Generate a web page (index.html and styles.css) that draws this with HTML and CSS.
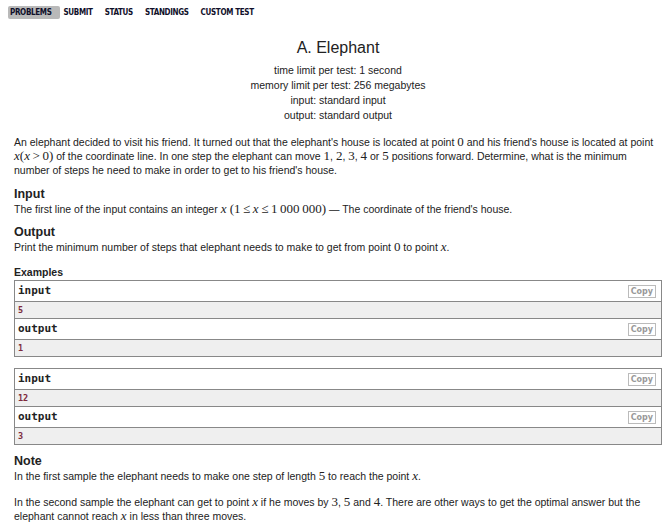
FILE: index.html
```html
<!DOCTYPE html>
<html lang="en">
  <head>
    <meta charset="UTF-8" />
    <title>A. Elephant</title>
    <link rel="stylesheet" href="styles.css">
  </head>
  <body>
    <div class="second-level-menu">
      <a href="#" class="current">Problems</a>
      <a href="#">Submit</a>
      <a href="#">Status</a>
      <a href="#">Standings</a>
      <a href="#">Custom test</a>
    </div>

    <div class="problem-statement">
      <div class="header">
        <div class="title">A. Elephant</div>
        <div class="limit">time limit per test: 1 second</div>
        <div class="limit">memory limit per test: 256 megabytes</div>
        <div class="limit">input: standard input</div>
        <div class="limit">output: standard output</div>
      </div>

      <p class="legend">
        An elephant decided to visit his friend. It turned out that the elephant's house is located at point <span class="tex">0</span> and his friend's house is located at point <span class="tex"><i>x</i>(<i>x</i>&thinsp;&gt;&thinsp;0)</span> of the coordinate line. In one step the elephant can move <span class="tex">1</span>, <span class="tex">2</span>, <span class="tex">3</span>, <span class="tex">4</span> or <span class="tex">5</span> positions forward. Determine, what is the minimum number of steps he need to make in order to get to his friend's house.
      </p>

      <div class="section">
        <div class="section-title">Input</div>
        <p>The first line of the input contains an integer <span class="tex"><i>x</i> (1&thinsp;&le;&thinsp;<i>x</i>&thinsp;&le;&thinsp;1&thinsp;000&thinsp;000)</span> — The coordinate of the friend's house.</p>
      </div>

      <div class="section">
        <div class="section-title">Output</div>
        <p>Print the minimum number of steps that elephant needs to make to get from point <span class="tex">0</span> to point <span class="tex"><i>x</i></span>.</p>
      </div>

      <div class="sample-tests">
        <div class="sample-title">Examples</div>

        <div class="sample-test">
          <div class="io">
            <div class="io-title">input<span class="copy">Copy</span></div>
            <pre>5</pre>
          </div>
          <div class="io">
            <div class="io-title">output<span class="copy">Copy</span></div>
            <pre>1</pre>
          </div>
        </div>

        <div class="sample-test">
          <div class="io">
            <div class="io-title">input<span class="copy">Copy</span></div>
            <pre>12</pre>
          </div>
          <div class="io">
            <div class="io-title">output<span class="copy">Copy</span></div>
            <pre>3</pre>
          </div>
        </div>
      </div>

      <div class="section note">
        <div class="section-title">Note</div>
        <p>In the first sample the elephant needs to make one step of length <span class="tex">5</span> to reach the point <span class="tex"><i>x</i></span>.</p>
        <p>In the second sample the elephant can get to point <span class="tex"><i>x</i></span> if he moves by <span class="tex">3</span>, <span class="tex">5</span> and <span class="tex">4</span>. There are other ways to get the optimal answer but the elephant cannot reach <span class="tex"><i>x</i></span> in less than three moves.</p>
      </div>
    </div>
  </body>
</html>
```

FILE: styles.css
```css
* {
  margin: 0;
  padding: 0;
  box-sizing: border-box;
}

body {
  font-family: "Liberation Sans", Arial, sans-serif;
  color: #222;
  background: white;
  padding: 6px 9px 0 14px;
}

.second-level-menu {
  display: flex;
  margin-left: -6px;
  margin-bottom: 19px;
}

.second-level-menu a {
  font-family: "DejaVu Sans Condensed", "DejaVu Sans", sans-serif;
  font-stretch: condensed;
  font-weight: bold;
  font-size: 8px;
  letter-spacing: -0.35px;
  line-height: 13px;
  text-transform: uppercase;
  text-decoration: none;
  color: #10102a;
  padding: 0 2px;
  margin-right: 8px;
  border-radius: 2px;
}

.second-level-menu a.current {
  background: #b9b9b9;
  padding-right: 9px;
  margin-right: 1px;
}

.problem-statement {
  font-size: 10.5px;
  line-height: 14px;
}

.header {
  text-align: center;
  margin-bottom: 12px;
}

.title {
  font-size: 16px;
  line-height: 20px;
  margin-bottom: 5px;
}

.limit {
  line-height: 15px;
}

.tex {
  font-family: "Liberation Serif", "Times New Roman", serif;
  font-size: 13px;
  line-height: 1;
}

.legend {
  margin-bottom: 9px;
}

.section {
  margin-bottom: 8px;
}

.section-title {
  font-size: 12.5px;
  font-weight: bold;
  line-height: 16px;
}

.sample-tests {
  margin-top: 11px;
}

.sample-title {
  font-weight: bold;
  line-height: 14px;
  margin-bottom: 1px;
}

.sample-test {
  border: 1px solid #888;
  margin-bottom: 11px;
}

.sample-test:last-child {
  margin-bottom: 8px;
}

.io-title {
  display: flex;
  justify-content: space-between;
  align-items: center;
  font-family: "DejaVu Sans Mono", "Liberation Mono", monospace;
  font-weight: bold;
  font-size: 11px;
  line-height: 20px;
  padding: 0 5px 0 3px;
  border-bottom: 1px solid #888;
}

.copy {
  font-family: "DejaVu Sans", sans-serif;
  font-size: 8px;
  line-height: 11px;
  color: #999;
  border: 1px solid #bbb;
  padding: 0 2px;
}

.io pre {
  font-family: "DejaVu Sans Mono", "Liberation Mono", monospace;
  font-weight: bold;
  font-size: 8.5px;
  line-height: 16px;
  color: #7d2b3c;
  background: #efefef;
  padding: 0 3px;
}

.io + .io {
  border-top: 1px solid #888;
}

.note p {
  margin-bottom: 12px;
}
```
